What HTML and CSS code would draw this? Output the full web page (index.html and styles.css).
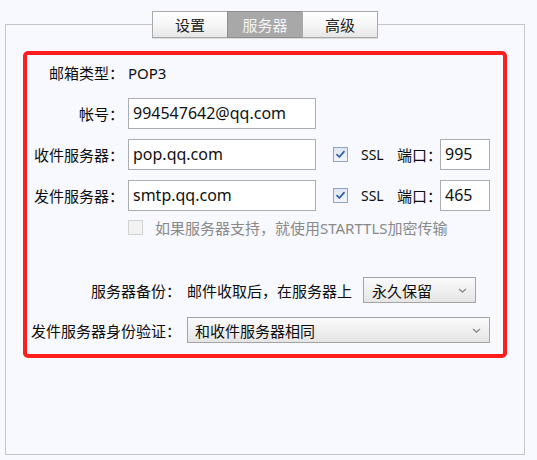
FILE: index.html
```html
<!DOCTYPE html>
<html lang="zh-CN">
<head>
<meta charset="utf-8">
<title>服务器设置</title>
<link rel="stylesheet" href="styles.css">
</head>
<body>
<div class="window">
  <div class="tabs">
    <div class="tab">设置</div>
    <div class="tab active">服务器</div>
    <div class="tab">高级</div>
  </div>
  <div class="panel">
    <div class="redbox">
      <div class="form-top">
        <div class="row row-type">
          <span class="label">邮箱类型：</span>
          <span class="value">POP3</span>
        </div>
        <div class="row row-input first-input">
          <span class="label">帐号：</span>
          <div class="input">994547642@qq.com</div>
        </div>
        <div class="row row-input">
          <span class="label">收件服务器：</span>
          <div class="input">pop.qq.com</div>
          <span class="check checked"><svg viewBox="0 0 13 13" width="13" height="13"><path d="M3 6.6 L5.4 9 L10 3.6" fill="none" stroke="#2d5ea5" stroke-width="1.7" stroke-linecap="round" stroke-linejoin="round"/></svg></span>
          <span class="ssl">SSL</span>
          <span class="port-label">端口：</span>
          <div class="input port">995</div>
        </div>
        <div class="row row-input">
          <span class="label">发件服务器：</span>
          <div class="input">smtp.qq.com</div>
          <span class="check checked"><svg viewBox="0 0 13 13" width="13" height="13"><path d="M3 6.6 L5.4 9 L10 3.6" fill="none" stroke="#2d5ea5" stroke-width="1.7" stroke-linecap="round" stroke-linejoin="round"/></svg></span>
          <span class="ssl">SSL</span>
          <span class="port-label">端口：</span>
          <div class="input port">465</div>
        </div>
        <div class="row row-tls">
          <span class="label"></span>
          <span class="check disabled"></span>
          <span class="disabled-text">如果服务器支持，就使用STARTTLS加密传输</span>
        </div>
      </div>
      <div class="form-bottom">
        <div class="row row-select">
          <span class="label wide">服务器备份：</span>
          <span class="value">邮件收取后，在服务器上</span>
          <div class="select short"><span>永久保留</span><svg class="chev" viewBox="0 0 9 5" width="9" height="5"><path d="M1 1 L4.5 4 L8 1" fill="none" stroke="#8c8c8c" stroke-width="1.4"/></svg></div>
        </div>
        <div class="row row-select second">
          <span class="label wide">发件服务器身份验证：</span>
          <div class="select long"><span>和收件服务器相同</span><svg class="chev" viewBox="0 0 9 5" width="9" height="5"><path d="M1 1 L4.5 4 L8 1" fill="none" stroke="#8c8c8c" stroke-width="1.4"/></svg></div>
        </div>
      </div>
    </div>
  </div>
</div>
</body>
</html>
```

FILE: styles.css
```css
* { box-sizing: border-box; }

html, body {
  margin: 0;
  padding: 0;
  background: #f7f9fe;
}

body {
  width: 537px;
  height: 460px;
  overflow: hidden;
  font-family: "Noto Sans", "Noto Sans CJK SC", sans-serif;
  font-size: 15px;
  color: #0d0d0d;
}

.window {
  padding-top: 11px;
}

.tabs {
  position: relative;
  z-index: 1;
  display: flex;
  justify-content: center;
  margin-left: 5px;
  width: 521px;
  height: 27px;
}

.tab {
  width: 76px;
  height: 27px;
  margin-left: -1px;
  border: 1px solid #a9a9a9;
  background: linear-gradient(#ffffff, #f4f4f4 60%, #e6e6e6);
  box-shadow: 0 1px 0 #dcdcdc;
  display: flex;
  align-items: center;
  justify-content: center;
  font-family: "Noto Sans CJK SC", sans-serif;
  font-size: 15px;
  color: #222;
  line-height: 1;
}

.tab.active {
  background: #a8a8a8;
  border-color: #8e8e8e;
  color: #f4f4f4;
}

.panel {
  margin-top: -14px;
  margin-left: 5px;
  width: 520px;
  height: 431px;
  border: 1px solid #c6c6c6;
  background: #f7f9fe;
  padding: 26px 17px 0 17px;
}

.redbox {
  border: 4px solid #ff1e1e;
  border-radius: 5px;
  padding: 8px 4px 11px 4px;
}

.row {
  display: flex;
  align-items: center;
  white-space: nowrap;
}

.label {
  flex: none;
  width: 93px;
  text-align: right;
  margin-right: 4px;
}

.label.wide {
  width: 150px;
  margin-right: 6px;
}

.row-type {
  height: 20px;
  line-height: 20px;
}

.row-input {
  height: 31px;
  margin-top: 10px;
}

.row-input.first-input {
  margin-top: 15px;
}

.input {
  flex: none;
  width: 188px;
  height: 31px;
  border: 1px solid #abadb3;
  background: #ffffff;
  padding: 0 4px;
  font-size: 16px;
  line-height: 29px;
  color: #111;
}

.input.port {
  width: 50px;
}

.check {
  flex: none;
  width: 15px;
  height: 15px;
  border: 1px solid #8ea3c6;
  background: linear-gradient(#dde6f3, #f3f6fb);
  display: flex;
  align-items: center;
  justify-content: center;
}

.row-input .check {
  margin-left: 17px;
}

.check.disabled {
  border-color: #d2d2d2;
  background: #f2f2f2;
}

.ssl {
  flex: none;
  width: 36px;
  margin-left: 13px;
  font-size: 14px;
}

.port-label {
  flex: none;
  width: 43px;
}

.row-tls {
  height: 20px;
  margin-top: 6px;
}

.disabled-text {
  margin-left: 12px;
  color: #8a8a8a;
}

.form-bottom {
  margin-top: 40px;
}

.row-select {
  height: 26px;
}

.row-select.second {
  margin-top: 14px;
}

.select {
  flex: none;
  height: 26px;
  border: 1px solid #a4a4a4;
  background: linear-gradient(#fafafa, #efefef 55%, #e4e4e4);
  display: flex;
  align-items: center;
  justify-content: space-between;
  padding: 0 8px 0 8px;
  font-family: "Noto Sans CJK SC", sans-serif;
}

.select.short {
  width: 113px;
  margin-left: 11px;
}

.select.long {
  width: 303px;
  padding-left: 7px;
}

.chev {
  flex: none;
}
```
